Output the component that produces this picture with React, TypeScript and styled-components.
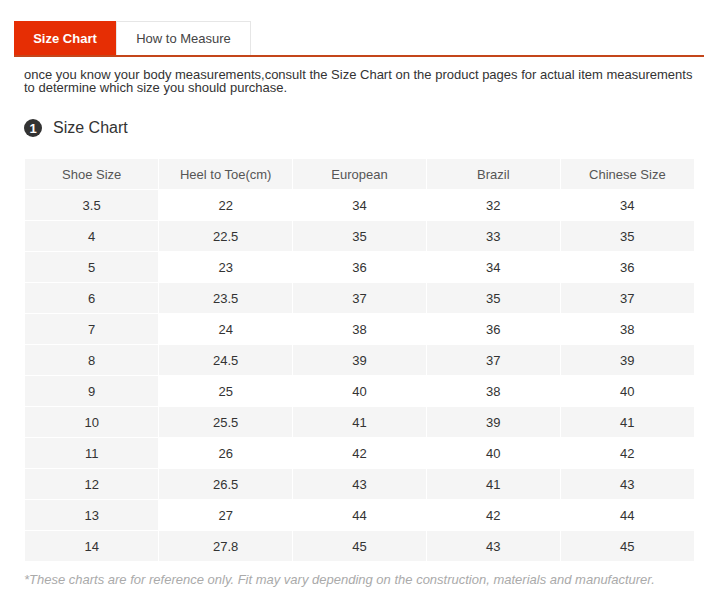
import styled, { createGlobalStyle } from 'styled-components';

const GlobalStyle = createGlobalStyle`
  body {
    margin: 0;
    background: #ffffff;
    font-family: 'Liberation Sans', Arial, sans-serif;
    color: #333;
  }
`;

const headers = ['Shoe Size', 'Heel to Toe(cm)', 'European', 'Brazil', 'Chinese Size'];

const rows: string[][] = [
  ['3.5', '22', '34', '32', '34'],
  ['4', '22.5', '35', '33', '35'],
  ['5', '23', '36', '34', '36'],
  ['6', '23.5', '37', '35', '37'],
  ['7', '24', '38', '36', '38'],
  ['8', '24.5', '39', '37', '39'],
  ['9', '25', '40', '38', '40'],
  ['10', '25.5', '41', '39', '41'],
  ['11', '26', '42', '40', '42'],
  ['12', '26.5', '43', '41', '43'],
  ['13', '27', '44', '42', '44'],
  ['14', '27.8', '45', '43', '45'],
];

export default function App() {
  return (
    <>
      <GlobalStyle />
      <Page>
        <Tabs>
          <Tab active>Size Chart</Tab>
          <Tab>How to Measure</Tab>
        </Tabs>
        <Body>
          <Intro>
            once you know your body measurements,consult the Size Chart on the product pages for actual item
            measurements to determine which size you should purchase.
          </Intro>
          <SectionTitle>
            <Badge>1</Badge>
            Size Chart
          </SectionTitle>
          <Chart>
            <thead>
              <tr>
                {headers.map(h => (
                  <HeadCell key={h}>{h}</HeadCell>
                ))}
              </tr>
            </thead>
            <tbody>
              {rows.map((row, i) => (
                <tr key={row[0]}>
                  {row.map((cell, j) => (
                    <Cell key={j} shaded={j === 0 || i % 2 === 1}>
                      {cell}
                    </Cell>
                  ))}
                </tr>
              ))}
            </tbody>
          </Chart>
          <Note>
            *These charts are for reference only. Fit may vary depending on the construction, materials and
            manufacturer.
          </Note>
        </Body>
      </Page>
    </>
  );
}

const Page = styled.div`
  width: 690px;
  padding: 21px 6px 0 14px;
`;

const Tabs = styled.div`
  display: flex;
  border-bottom: 2px solid #c4461a;
`;

const Tab = styled.div<{ active?: boolean }>`
  height: 34px;
  box-sizing: border-box;
  display: flex;
  align-items: center;
  justify-content: center;
  white-space: nowrap;
  font-size: 13px;
  background: ${p => (p.active ? '#e62e04' : '#ffffff')};
  color: ${p => (p.active ? '#ffffff' : '#444')};
  font-weight: ${p => (p.active ? 'bold' : 'normal')};
  border: ${p => (p.active ? 'none' : '1px solid #e6e6e6')};
  border-bottom: none;
  width: ${p => (p.active ? '102px' : '135px')};
`;

const Body = styled.div`
  padding: 11px 0 0 10px;
`;

const Intro = styled.p`
  margin: 0;
  font-size: 13px;
  line-height: 13px;
  color: #333;
`;

const SectionTitle = styled.div`
  display: flex;
  align-items: center;
  gap: 11px;
  margin-top: 25px;
  font-size: 16px;
  color: #333;
`;

const Badge = styled.span`
  width: 18px;
  height: 18px;
  border-radius: 50%;
  background: #333;
  color: #fff;
  font-size: 13px;
  font-weight: bold;
  display: flex;
  align-items: center;
  justify-content: center;
`;

const Chart = styled.table`
  margin-top: 22px;
  margin-left: 1px;
  width: 669px;
  border-collapse: collapse;
  table-layout: fixed;
  font-size: 13px;
`;

const HeadCell = styled.th`
  height: 30px;
  padding: 0;
  font-weight: normal;
  color: #555;
  background: #f5f5f5;
  border-right: 1px solid #fff;
  border-bottom: 1px solid #fff;
  &:last-child {
    border-right: none;
  }
`;

const Cell = styled.td<{ shaded: boolean }>`
  height: 30px;
  padding: 0;
  text-align: center;
  color: #333;
  background: ${p => (p.shaded ? '#f5f5f5' : '#ffffff')};
  border-right: 1px solid #fff;
  border-bottom: 1px solid #fff;
  &:last-child {
    border-right: none;
  }
`;

const Note = styled.p`
  margin: 10px 0 0;
  font-size: 13px;
  font-style: italic;
  color: #aaa;
`;
